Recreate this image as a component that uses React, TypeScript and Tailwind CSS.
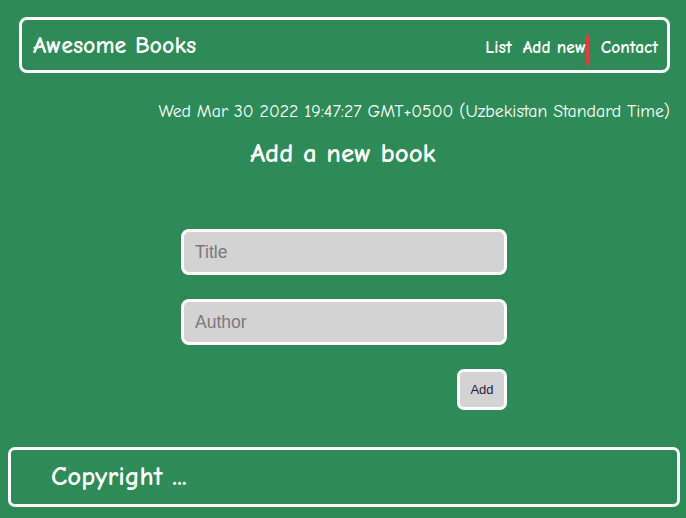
export default function App() {
  const comic = "font-['Comic_Sans_MS','Comic_Neue','DejaVu_Sans',sans-serif]";

  return (
    <div className={`min-h-[518px] bg-[#2e8b57] text-white ${comic}`}>
      <header className="pt-[17px] pl-[19px]">
        <div className="w-[651px] h-[56px] border-[3px] border-white rounded-[8px] flex items-center justify-between pl-[11px] pr-[9px]">
          <h1 className="text-[24px] font-bold leading-none">Awesome Books</h1>
          <nav className="flex items-start text-[17.5px] font-bold leading-[20px] mt-[9px]">
            <a className="pt-[2px] pb-[8px]">List</a>
            <a className="ml-[11px] pt-[2px] pb-[8px] border-r-[3px] border-[#e63946]">Add new</a>
            <a className="ml-[12px] pt-[2px] pb-[8px]">Contact</a>
          </nav>
        </div>
      </header>

      <main className="flex flex-col">
        <p className="text-right pr-[16px] mt-[28px] text-[17.75px] leading-[20px]">
          Wed Mar 30 2022 19:47:27 GMT+0500 (Uzbekistan Standard Time)
        </p>
        <h2 className="text-center text-[27px] font-bold mt-[19px] leading-[28px]">Add a new book</h2>

        <form className="w-[326px] ml-[181px] mt-[61px] flex flex-col font-['Liberation_Sans',Arial,sans-serif]">
          <input
            placeholder="Title"
            className="h-[46px] bg-[#d3d3d3] border-[3px] border-white rounded-[8px] px-[11px] text-[17.5px] text-gray-800 placeholder:text-[#7a7a7a] outline-none"
          />
          <input
            placeholder="Author"
            className="h-[46px] mt-[24px] bg-[#d3d3d3] border-[3px] border-white rounded-[8px] px-[11px] text-[17.5px] text-gray-800 placeholder:text-[#7a7a7a] outline-none"
          />
          <div className="flex justify-end mt-[24px]">
            <button
              type="button"
              className="w-[50px] h-[41px] bg-[#d3d3d3] border-[3px] border-white rounded-[7px] text-[13px] text-[#1f1f3a]"
            >
              Add
            </button>
          </div>
        </form>
      </main>

      <footer className="pl-[8px] mt-[37px]">
        <div className="w-[672px] h-[60px] border-[3px] border-white rounded-[7px] flex items-center pl-[40px]">
          <p className="text-[27px] font-bold">Copyright ...</p>
        </div>
      </footer>
    </div>
  );
}
